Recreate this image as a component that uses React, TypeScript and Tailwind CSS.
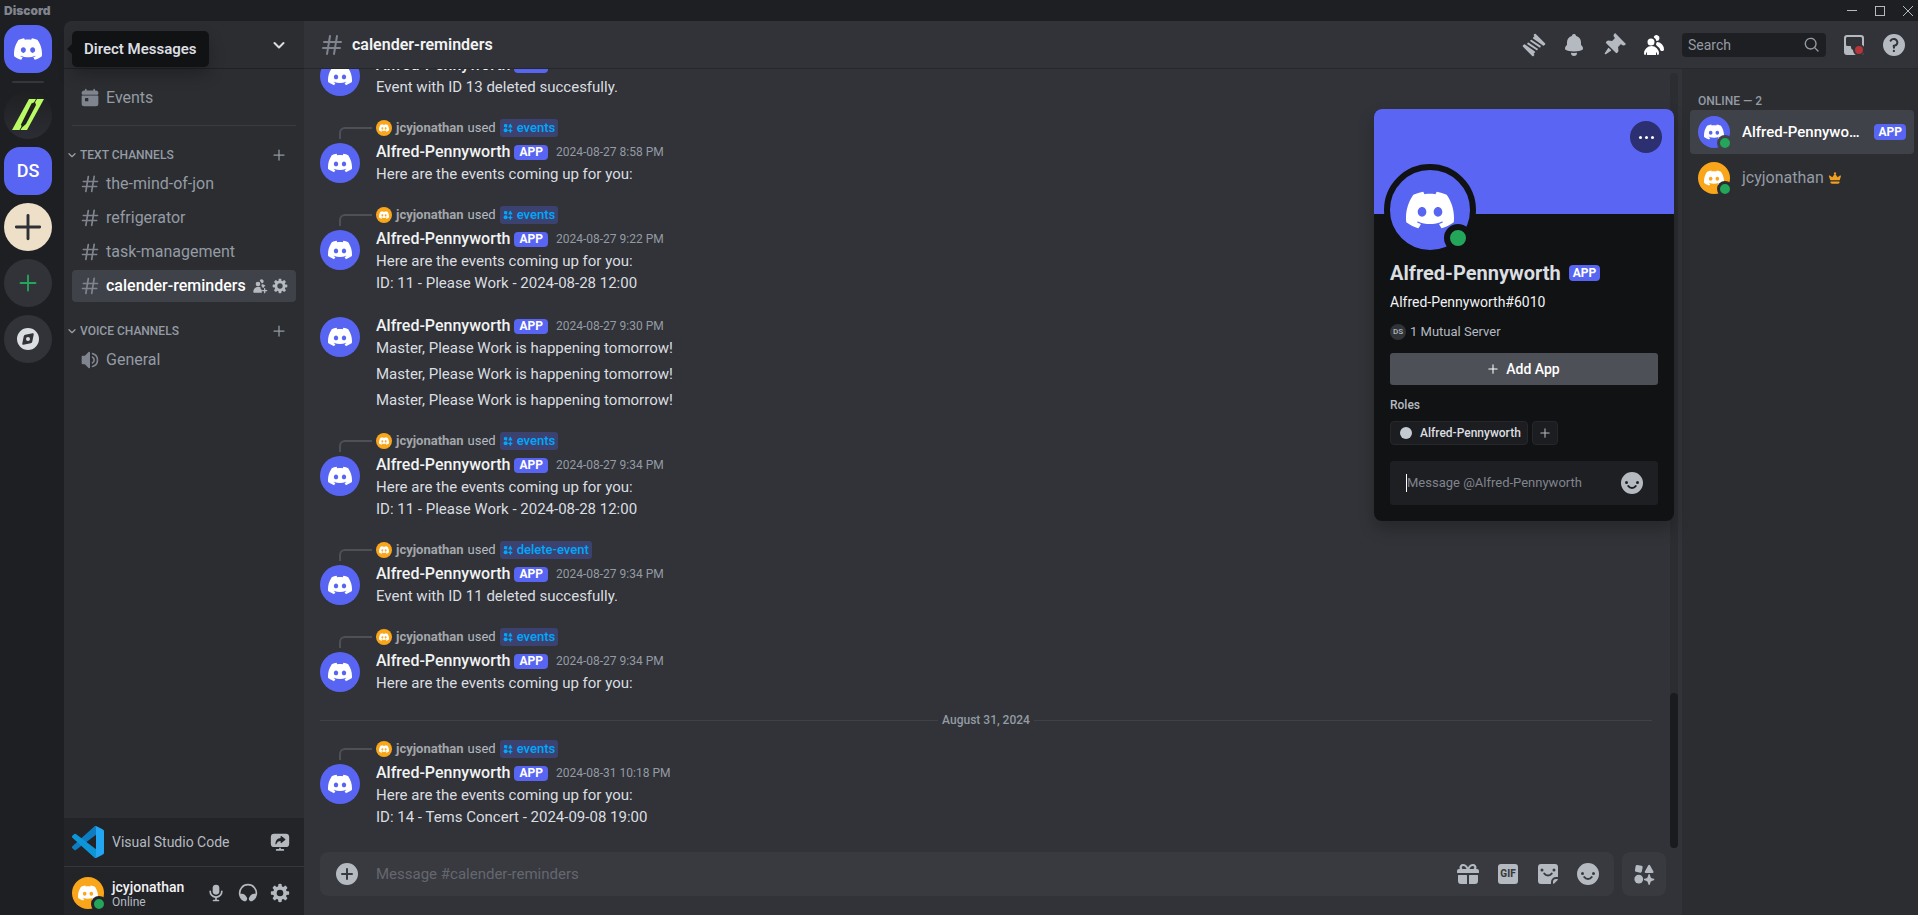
import React from "react";
import clsx from "clsx";
import { SiDiscord } from "react-icons/si";

interface IconProps {
  className?: string;
  paths: string[];
}

interface MessageProps {
  command?: string;
  time: string;
  lines: string[];
  more?: string[];
}

const icons = {
  hash: [
    "M10.99 3.16A1 1 0 1 0 9 2.84L8.15 8H4a1 1 0 0 0 0 2h3.82l-.67 4H3a1 1 0 1 0 0 2h3.82l-.8 4.84a1 1 0 0 0 1.97.32L8.85 16h4.97l-.8 4.84a1 1 0 0 0 1.97.32l.86-5.16H20a1 1 0 1 0 0-2h-3.82l.67-4H21a1 1 0 1 0 0-2h-3.82l.8-4.84a1 1 0 1 0-1.97-.32L15.15 8h-4.97l.8-4.84ZM14.15 14l.67-4H9.85l-.67 4h4.97Z",
  ],
  mic: [
    "M12 2a4 4 0 0 0-4 4v4a4 4 0 0 0 8 0V6a4 4 0 0 0-4-4Z",
    "M6 10a1 1 0 0 0-2 0 8 8 0 0 0 7 7.94V20H9a1 1 0 1 0 0 2h6a1 1 0 1 0 0-2h-2v-2.06A8 8 0 0 0 20 10a1 1 0 1 0-2 0 6 6 0 0 1-12 0Z",
  ],
  headphones: [
    "M12 3a9 9 0 0 0-8.95 10h1.87a5 5 0 0 1 4.1 2.13l1.37 1.97a3.1 3.1 0 0 1-.17 3.78 2.85 2.85 0 0 1-3.55.74 11 11 0 1 1 10.66 0c-1.27.71-2.73.23-3.55-.74a3.1 3.1 0 0 1-.17-3.78l1.38-1.97a5 5 0 0 1 4.1-2.13h1.86A9 9 0 0 0 12 3Z",
  ],
  gear: [
    "M10.56 1.1c-.46.05-.7.53-.64.98.18 1.16-.19 2.2-.98 2.53-.8.33-1.79-.15-2.49-1.1-.27-.36-.78-.52-1.14-.24-.77.59-1.45 1.27-2.04 2.04-.28.36-.12.87.24 1.14.96.7 1.43 1.7 1.1 2.49-.33.8-1.37 1.16-2.53.98-.45-.07-.93.18-.99.64a11.1 11.1 0 0 0 0 2.88c.06.46.54.7.99.64 1.16-.18 2.2.19 2.53.98.33.8-.14 1.79-1.1 2.49-.36.27-.52.78-.24 1.14.59.77 1.27 1.45 2.04 2.04.36.28.87.12 1.14-.24.7-.95 1.7-1.43 2.49-1.1.8.33 1.16 1.37.98 2.53-.07.45.18.93.64.99a11.1 11.1 0 0 0 2.88 0c.46-.06.7-.54.64-.99-.18-1.16.19-2.2.98-2.53.8-.33 1.79.14 2.49 1.1.27.36.78.52 1.14.24.77-.59 1.45-1.27 2.04-2.04.28-.36.12-.87-.24-1.14-.96-.7-1.43-1.7-1.1-2.49.33-.8 1.37-1.16 2.53-.98.45.07.93-.18.99-.64a11.1 11.1 0 0 0 0-2.88c-.06-.46-.54-.7-.99-.64-1.16.18-2.2-.19-2.53-.98-.33-.8.14-1.79 1.1-2.49.36-.27.52-.78.24-1.14a11.07 11.07 0 0 0-2.04-2.04c-.36-.28-.87-.12-1.14.24-.7.96-1.7 1.43-2.49 1.1-.8-.33-1.16-1.37-.98-2.53.07-.45-.18-.93-.64-.99a11.1 11.1 0 0 0-2.88 0ZM16 12a4 4 0 1 1-8 0 4 4 0 0 1 8 0Z",
  ],
  smile: [
    "M12 23a11 11 0 1 0 0-22 11 11 0 0 0 0 22ZM6.5 13a1.5 1.5 0 1 0 0-3 1.5 1.5 0 0 0 0 3Zm11 0a1.5 1.5 0 1 0 0-3 1.5 1.5 0 0 0 0 3Zm-9.8 1.17a1 1 0 0 1 1.39.27 3.5 3.5 0 0 0 5.82 0 1 1 0 0 1 1.66 1.12 5.5 5.5 0 0 1-9.14 0 1 1 0 0 1 .27-1.4Z",
  ],
  bell: [
    "M9.7 2.89c.18-.07.32-.24.37-.43a2 2 0 0 1 3.86 0c.05.2.19.36.38.43A7 7 0 0 1 19 9.5v2.09c0 .12.05.24.13.33l1.1 1.22a3 3 0 0 1 .77 2.01v.28c0 .67-.34 1.29-.95 1.56-1.31.6-4 1.51-8.05 1.51-4.05 0-6.74-.91-8.05-1.5-.61-.28-.95-.9-.95-1.57v-.28a3 3 0 0 1 .77-2l1.1-1.23a.5.5 0 0 0 .13-.33V9.5a7 7 0 0 1 4.7-6.61ZM9.18 19.84A.16.16 0 0 0 9 20a3 3 0 1 0 6 0c0-.1-.09-.17-.18-.16a24.84 24.84 0 0 1-5.64 0Z",
  ],
  pin: [
    "M19.38 11.38a3 3 0 0 0 4.24 0l.03-.03a.5.5 0 0 0 0-.7L13.35.35a.5.5 0 0 0-.7 0l-.03.03a3 3 0 0 0 0 4.24L13 5l-2.92 2.92-3.65-.34a2 2 0 0 0-1.6.58l-.62.63a1 1 0 0 0 0 1.42l9.58 9.58a1 1 0 0 0 1.42 0l.63-.63a2 2 0 0 0 .58-1.6l-.34-3.64L19 11l.38.38ZM9.07 17.07a.5.5 0 0 1-.08.77l-5.15 3.43a.5.5 0 0 1-.63-.06l-.42-.42a.5.5 0 0 1-.06-.63L6.16 15a.5.5 0 0 1 .77-.08l2.14 2.14Z",
  ],
  members: [
    "M14.5 8a3 3 0 1 0-2.7-4.3c-.2.4.06.86.44 1.12a5 5 0 0 1 2.14 3.08c.01.06.06.1.12.1ZM18.44 17.27c.15.43.54.73 1 .73h1.06c.83 0 1.5-.67 1.5-1.5a7.5 7.5 0 0 0-6.5-7.43c-.55-.08-.99.38-1.1.92-.06.3-.15.6-.26.87-.23.58-.05 1.3.47 1.63a9.53 9.53 0 0 1 3.83 4.78ZM12.5 9a3.5 3.5 0 1 1-7 0 3.5 3.5 0 0 1 7 0ZM2 20.5a7.5 7.5 0 0 1 15 0c0 .83-.67 1.5-1.5 1.5a.2.2 0 0 1-.2-.16c-.2-.96-.56-1.87-.88-2.54-.1-.23-.42-.15-.42.1v2.1a.5.5 0 0 1-.5.5h-8a.5.5 0 0 1-.5-.5v-2.1c0-.25-.31-.33-.42-.1-.32.67-.67 1.58-.88 2.54a.2.2 0 0 1-.2.16A1.5 1.5 0 0 1 2 20.5Z",
  ],
  threads: [
    "M12 2.81a1 1 0 0 1 0-1.41l.36-.36a1 1 0 0 1 1.41 0l9.2 9.2a1 1 0 0 1 0 1.4l-.7.7a1 1 0 0 1-1.3.13l-9.54-6.72a1 1 0 0 1-.08-1.58l1-1L12 2.8ZM12 21.2a1 1 0 0 1 0 1.41l-.35.35a1 1 0 0 1-1.41 0l-9.2-9.19a1 1 0 0 1 0-1.41l.7-.7a1 1 0 0 1 1.3-.12l9.54 6.72a1 1 0 0 1 .07 1.58l-1 1 .35.36ZM15.66 16.8a1 1 0 0 1-1.38.28l-8.49-5.66A1 1 0 1 1 6.9 9.76l8.49 5.65a1 1 0 0 1 .27 1.39ZM17.1 14.25a1 1 0 1 0 1.11-1.66L9.73 6.93a1 1 0 0 0-1.11 1.66l8.49 5.66Z",
  ],
  search: [
    "M15.62 17.03a9 9 0 1 1 1.41-1.41l4.68 4.67a1 1 0 0 1-1.42 1.42l-4.67-4.68ZM17 10a7 7 0 1 1-14 0 7 7 0 0 1 14 0Z",
  ],
  inbox: [
    "M5 2a3 3 0 0 0-3 3v14a3 3 0 0 0 3 3h14a3 3 0 0 0 3-3V5a3 3 0 0 0-3-3H5ZM4 5.5C4 4.67 4.67 4 5.5 4h13c.83 0 1.5.67 1.5 1.5v6c0 .83-.67 1.5-1.5 1.5h-2.65c-.5 0-.85.5-.85 1a3 3 0 1 1-6 0c0-.5-.35-1-.85-1H5.5A1.5 1.5 0 0 1 4 11.5v-6Z",
  ],
  help: [
    "M12 23a11 11 0 1 0 0-22 11 11 0 0 0 0 22Zm-.28-16c-.98 0-1.81.47-2.27 1.14A1 1 0 1 1 7.8 7.01 4.73 4.73 0 0 1 11.72 5c2.5 0 4.65 1.88 4.65 4.38 0 2.1-1.54 3.77-3.52 4.24l.14 1a1 1 0 0 1-1.98.27l-.28-2a1 1 0 0 1 .99-1.14c1.54 0 2.65-1.14 2.65-2.38 0-1.23-1.1-2.37-2.65-2.37ZM13 17.88a1.13 1.13 0 1 1-2.25 0 1.13 1.13 0 0 1 2.25 0Z",
  ],
  speaker: [
    "M12 3a1 1 0 0 0-1-1h-.06a1 1 0 0 0-.74.32L5.92 7H3a1 1 0 0 0-1 1v8a1 1 0 0 0 1 1h2.92l4.28 4.68a1 1 0 0 0 .74.32H11a1 1 0 0 0 1-1V3ZM15.1 20.75c-.58.14-1.1-.33-1.1-.92v-.03c0-.5.37-.92.85-1.05a7 7 0 0 0 0-13.5A1.11 1.11 0 0 1 14 4.2v-.03c0-.6.52-1.06 1.1-.92a9 9 0 0 1 0 17.5ZM15.16 16.51c-.57.28-1.16-.2-1.16-.83v-.14c0-.43.28-.8.63-1.02a3 3 0 0 0 0-5.04c-.35-.23-.63-.6-.63-1.02v-.14c0-.63.59-1.1 1.16-.83a5 5 0 0 1 0 9.02Z",
  ],
  compass: [
    "M23 12a11 11 0 1 1-22 0 11 11 0 0 1 22 0ZM7.74 9.3A2 2 0 0 1 9.3 7.75l7.22-1.45a1 1 0 0 1 1.18 1.18l-1.45 7.22a2 2 0 0 1-1.57 1.57l-7.22 1.45a1 1 0 0 1-1.18-1.18L7.74 9.3Z",
    "M14 12a2 2 0 1 1-4 0 2 2 0 0 1 4 0Z",
  ],
  crown: [
    "M5 18a1 1 0 0 0-1 1 3 3 0 0 0 3 3h10a3 3 0 0 0 3-3 1 1 0 0 0-1-1H5ZM3.04 7.76a1 1 0 0 0-1.52 1.15l2.25 6.42a1 1 0 0 0 .94.67h14.55a1 1 0 0 0 .95-.71l1.94-6.45a1 1 0 0 0-1.55-1.1l-4.11 3-3.55-5.33.82-.82a.83.83 0 0 0 0-1.18l-1.17-1.17a.83.83 0 0 0-1.18 0l-1.17 1.17a.83.83 0 0 0 0 1.18l.82.82-3.61 5.42-4.41-3.07Z",
  ],
  plusCircle: [
    "M12 23a11 11 0 1 0 0-22 11 11 0 0 0 0 22Zm0-17a1 1 0 0 1 1 1v4h4a1 1 0 1 1 0 2h-4v4a1 1 0 1 1-2 0v-4H7a1 1 0 1 1 0-2h4V7a1 1 0 0 1 1-1Z",
  ],
  invite: [
    "M14.5 8a3 3 0 1 0-2.7-4.3c-.2.4.06.86.44 1.12a5 5 0 0 1 2.14 3.08c.01.06.06.1.12.1Z",
    "M12.5 9a3.5 3.5 0 1 1-7 0 3.5 3.5 0 0 1 7 0Z",
    "M2 20.5a7.5 7.5 0 0 1 11-6.64A3 3 0 0 0 16 18h0a3 3 0 0 0-1 4h-2.5L4 22a1.5 1.5 0 0 1-2-1.5Z",
    "M14.6 9.4c2.5 0 4.6.8 5.9 2.6-1.7 0-2.5 1-2.5 2.3-.6.2-1.1.4-1.5.8a9.5 9.5 0 0 0-2.5-3.1c.3-.8.5-1.7.6-2.6Z",
    "M19 15a1 1 0 0 1 1 1v2h2a1 1 0 1 1 0 2h-2v2a1 1 0 1 1-2 0v-2h-2a1 1 0 1 1 0-2h2v-2a1 1 0 0 1 1-1Z",
  ],
  calendar: [
    "M7 1a1 1 0 0 1 1 1v.75c0 .14.11.25.25.25h7.5c.14 0 .25-.11.25-.25V2a1 1 0 1 1 2 0v.75c0 .14.11.25.25.25H19a3 3 0 0 1 3 3v1a1 1 0 0 1-1 1H3a1 1 0 0 1-1-1V6a3 3 0 0 1 3-3h.75A.25.25 0 0 0 6 2.75V2a1 1 0 0 1 1-1Z",
    "M2 10a1 1 0 0 1 1-1h18a1 1 0 0 1 1 1v9a3 3 0 0 1-3 3H5a3 3 0 0 1-3-3v-9Zm4.5 2a.5.5 0 0 0-.5.5v3c0 .28.22.5.5.5h3a.5.5 0 0 0 .5-.5v-3a.5.5 0 0 0-.5-.5h-3Z",
  ],
  gift: [
    "M7 2a3.5 3.5 0 0 0-3.3 4.7c.05.16-.07.3-.24.3H3a2 2 0 0 0-2 2v1.5c0 .28.22.5.5.5h21a.5.5 0 0 0 .5-.5V9a2 2 0 0 0-2-2h-.46c-.17 0-.29-.14-.24-.3A3.5 3.5 0 0 0 17 2c-2.3 0-4 1.3-5 3.5C11 3.3 9.3 2 7 2Zm.2 2c1.5 0 2.6 1 3.3 3H7.2a1.5 1.5 0 0 1 0-3Zm9.6 0a1.5 1.5 0 0 1 0 3h-3.3c.7-2 1.8-3 3.3-3Z",
    "M2.5 13h8c.28 0 .5.22.5.5v8a.5.5 0 0 1-.5.5H5a3 3 0 0 1-3-3v-5.5c0-.28.22-.5.5-.5ZM13.5 13h8c.28 0 .5.22.5.5V19a3 3 0 0 1-3 3h-5.5a.5.5 0 0 1-.5-.5v-8c0-.28.22-.5.5-.5Z",
  ],
  sticker: [
    "M5 2a3 3 0 0 0-3 3v14a3 3 0 0 0 3 3h9.5c.28 0 .5-.22.5-.5V20a5 5 0 0 1 5-5h1.5a.5.5 0 0 0 .5-.5V5a3 3 0 0 0-3-3H5Zm1 7.5a1.5 1.5 0 1 0 0-3 1.5 1.5 0 0 0 0 3Zm12 0a1.5 1.5 0 1 0 0-3 1.5 1.5 0 0 0 0 3ZM7.7 10.7a1 1 0 0 1 1.39.27 3.5 3.5 0 0 0 5.82 0 1 1 0 0 1 1.66 1.12 5.5 5.5 0 0 1-9.14 0 1 1 0 0 1 .27-1.4Z",
    "M17 21.3V20a3 3 0 0 1 3-3h1.3c.5 0 .7.5.4.9l-3.8 3.8c-.4.3-.9.1-.9-.4Z",
  ],
  apps: [
    "M4.5 2.2 9.3 3a1.5 1.5 0 0 1 1.2 1.8l-.9 4.5a1.5 1.5 0 0 1-1.8 1.2l-4.5-.9a1.5 1.5 0 0 1-1.2-1.8l.8-4.5a1.5 1.5 0 0 1 1.6-1.1Z",
    "M16.7 2.5a1 1 0 0 1 1.8 0l3.8 6.8a1 1 0 0 1-.9 1.5h-7.6a1 1 0 0 1-.9-1.5l3.8-6.8Z",
    "M6.3 22.3a4.8 4.8 0 1 0 0-9.6 4.8 4.8 0 0 0 0 9.6Z",
    "M16.8 12.9a.8.8 0 0 1 1.6 0l.8 2.4a2 2 0 0 0 1.2 1.2l2.3.8a.8.8 0 0 1 0 1.5l-2.3.8a2 2 0 0 0-1.2 1.2l-.8 2.3a.8.8 0 0 1-1.6 0l-.8-2.3a2 2 0 0 0-1.2-1.2l-2.3-.8a.8.8 0 0 1 0-1.5l2.3-.8a2 2 0 0 0 1.2-1.2l.8-2.4Z",
  ],
  stream: [
    "M5 2a4 4 0 0 0-4 4v8a4 4 0 0 0 4 4h14a4 4 0 0 0 4-4V6a4 4 0 0 0-4-4H5Zm8.7 2.8 4.5 3.7a.6.6 0 0 1 0 1l-4.5 3.7a.6.6 0 0 1-1-.5V10.9c-2.7 0-4.2 1.2-5 3.5-.2.6-1.4.4-1.3-.3.5-4.4 2.6-6.6 6.3-6.9V5.3c0-.6.6-.8 1-.5Z",
    "M11 19h2v1.5h3a1 1 0 1 1 0 2H8a1 1 0 1 1 0-2h3V19Z",
  ],
};

const guildButton =
  "flex size-12 shrink-0 items-center justify-center overflow-hidden text-lg font-medium text-white";

function Icon({ paths, className }: IconProps) {
  return (
    <svg
      viewBox="0 0 24 24"
      fill="currentColor"
      fillRule="evenodd"
      className={clsx("shrink-0", className)}
      aria-hidden="true"
    >
      {paths.map((d) => (
        <path key={d} d={d} />
      ))}
    </svg>
  );
}

function Plus({ className }: { className?: string }) {
  return (
    <svg viewBox="0 0 24 24" className={clsx("shrink-0", className)} aria-hidden="true">
      <path d="M12 2v20M2 12h20" stroke="currentColor" strokeWidth="2.5" strokeLinecap="round" />
    </svg>
  );
}

function Chevron({ className }: { className?: string }) {
  return (
    <svg viewBox="0 0 12 12" className={clsx("shrink-0", className)} aria-hidden="true">
      <path
        d="m1.5 4 4.5 4.5L10.5 4"
        fill="none"
        stroke="currentColor"
        strokeWidth="2"
        strokeLinecap="round"
        strokeLinejoin="round"
      />
    </svg>
  );
}

function VsCode() {
  return (
    <svg viewBox="0 0 100 100" className="size-8 shrink-0" aria-hidden="true">
      <path
        fill="#0d7cc0"
        d="M96.46 10.8 75.86.88a6.23 6.23 0 0 0-7.11 1.2L1.3 63.58a4.17 4.17 0 0 0 0 6.17l5.51 5a4.17 4.17 0 0 0 5.32.24L75 27.3V4.67L96.46 10.8Z"
      />
      <path
        fill="#0e95d8"
        d="m96.46 89.2-20.6 9.92a6.23 6.23 0 0 1-7.11-1.2L1.3 36.42a4.17 4.17 0 0 1 0-6.17l5.51-5a4.17 4.17 0 0 1 5.32-.24L75 72.7v22.63l21.46-6.13Z"
      />
      <path
        fill="#22a6f1"
        d="M75.86 99.13a6.23 6.23 0 0 1-7.11-1.21c2.31 2.3 6.25.67 6.25-2.59V4.67c0-3.26-3.94-4.89-6.25-2.59a6.23 6.23 0 0 1 7.11-1.21l20.6 9.91A6.25 6.25 0 0 1 100 16.41v67.18c0 2.4-1.38 4.59-3.54 5.63l-20.6 9.91Z"
      />
    </svg>
  );
}

function Avatar({ orange, ring }: { orange?: boolean; ring: string }) {
  return (
    <span
      className={clsx(
        "relative flex size-8 shrink-0 items-center justify-center rounded-full text-white",
        orange ? "bg-[#faa61a]" : "bg-[#5865f2]"
      )}
    >
      <SiDiscord className="size-5" />
      <span
        className={clsx("absolute -right-[3px] -bottom-[3px] size-4 rounded-full border-3 bg-[#23a55a]", ring)}
      />
    </span>
  );
}

function AppTag({ className }: { className?: string }) {
  return (
    <span
      className={clsx(
        "flex shrink-0 items-center rounded bg-[#5865f2] text-xs leading-none font-bold text-white",
        className
      )}
    >
      APP
    </span>
  );
}

function Message({ command, time, lines, more = [] }: MessageProps) {
  return (
    <article className="mt-[17px] text-[15px] leading-[22px] text-[#dbdee1]">
      <div className="py-[2px]">
        {command && (
          <div className="mb-1 flex h-[18px] items-center text-[13px] text-[#b5bac1]">
            <span className="mt-2 mr-1 -mb-[2px] ml-[19px] h-3 w-[33px] shrink-0 rounded-tl-md border-t-2 border-l-2 border-[#4e5058]" />
            <span className="mr-1 flex size-4 items-center justify-center rounded-full bg-[#faa61a] text-white">
              <SiDiscord className="size-[10px]" />
            </span>
            <span className="font-bold text-[#a3a6aa]">jcyjonathan</span>
            <span className="mx-1">used</span>
            <button
              type="button"
              className="flex h-[18px] items-center gap-1 rounded-[3px] bg-[#3c4270] px-[3px] font-medium text-[#00a8fc]"
            >
              <Icon paths={icons.apps} className="size-[10px]" />
              {command}
            </button>
          </div>
        )}
        <div className="flex gap-4">
          <span className="mt-[2px] flex size-10 shrink-0 items-center justify-center rounded-full bg-[#5865f2] text-white">
            <SiDiscord className="size-6" />
          </span>
          <div>
            <div className="flex h-[22px] items-center">
              <span className="mr-1 text-base leading-[22px] font-medium text-[#f2f3f5]">Alfred-Pennyworth</span>
              <AppTag className="h-[15px] px-[5px]" />
              <time className="ml-2 text-xs text-[#949ba4]">{time}</time>
            </div>
            {lines.map((line) => (
              <p key={line}>{line}</p>
            ))}
          </div>
        </div>
      </div>
      {more.map((line, i) => (
        <p key={i} className="py-[2px] pl-14">
          {line}
        </p>
      ))}
    </article>
  );
}

function Channel({ name, active }: { name: string; active?: boolean }) {
  return (
    <li>
      <a
        href="#"
        className={clsx(
          "flex h-8 items-center gap-[6px] rounded px-2",
          active ? "bg-[#404249] font-medium text-white" : "text-[#949ba4]"
        )}
      >
        <Icon paths={icons.hash} className="size-5 text-[#80848e]" />
        <span className="flex-1">{name}</span>
        {active && (
          <span className="flex gap-1 text-[#b5bac1]">
            <Icon paths={icons.invite} className="size-4" />
            <Icon paths={icons.gear} className="size-4" />
          </span>
        )}
      </a>
    </li>
  );
}

function SectionLabel({ children }: { children: React.ReactNode }) {
  return (
    <div className="mt-[21px] mb-[5px] flex h-4 items-center text-xs font-medium text-[#949ba4] uppercase">
      <Chevron className="mr-1 -ml-1 size-2" />
      <h2 className="flex-1">{children}</h2>
      <button type="button" aria-label="Create Channel" className="mr-[11px]">
        <Plus className="size-3" />
      </button>
    </div>
  );
}

function TitleBar() {
  return (
    <div className="flex h-[21px] shrink-0 items-center justify-between bg-[#1e1f22] pl-1 text-[#b5bac1]">
      <span className="font-['Inter',sans-serif] text-xs leading-none font-black text-[#80848e]">Discord</span>
      <div className="flex gap-2">
        <button type="button" aria-label="Minimize" className="flex h-5 w-5 items-center justify-center">
          <span className="h-px w-[10px] bg-current" />
        </button>
        <button type="button" aria-label="Maximize" className="flex h-5 w-5 items-center justify-center">
          <span className="size-[10px] border border-current" />
        </button>
        <button type="button" aria-label="Close" className="flex h-5 w-5 items-center justify-center">
          <svg viewBox="0 0 10 10" className="size-[10px]" aria-hidden="true">
            <path d="m0 0 10 10M10 0 0 10" stroke="currentColor" />
          </svg>
        </button>
      </div>
    </div>
  );
}

function GuildRail() {
  return (
    <nav className="flex w-16 shrink-0 flex-col items-center gap-2 pt-1 pr-2">
      <div className="relative z-20">
        <button type="button" aria-label="Direct Messages" className={clsx(guildButton, "rounded-2xl bg-[#5865f2]")}>
          <SiDiscord className="size-7" />
        </button>
        <div
          role="tooltip"
          className="absolute top-[6px] left-[68px] flex h-9 items-center rounded-[5px] bg-[#111214] px-3 text-[15px] font-semibold whitespace-nowrap text-[#dbdee1] shadow-[0_8px_16px_rgba(0,0,0,0.24)]"
        >
          <span className="absolute top-[13px] -left-[5px] border-y-5 border-r-5 border-y-transparent border-r-[#111214]" />
          Direct Messages
        </div>
      </div>
      <span className="h-[2px] w-8 shrink-0 rounded-sm bg-[#35363c]" />
      <button
        type="button"
        aria-label="Green slashes server"
        className={clsx(guildButton, "rounded-full bg-linear-to-b from-[#1f2021] to-[#2c2c35]")}
      >
        <svg viewBox="0 0 48 48" className="size-12" aria-hidden="true">
          <path d="M25 8h15L23 39H8Z" fill="#b9fb64" />
          <path d="m31 11-3.5 1.5L17 33.5l1 3 4-3.5L32 14Z" fill="#20211f" />
          <path d="m32.5 8-3.5 6M16 39l3.5-6" stroke="#20211f" strokeWidth="1" />
        </svg>
      </button>
      <button type="button" className={clsx(guildButton, "rounded-2xl bg-[#5865f2]")}>
        DS
      </button>
      <button type="button" aria-label="Plus server" className={clsx(guildButton, "rounded-full bg-[#eee0c8]")}>
        <Plus className="size-7 text-[#2f3136]" />
      </button>
      <button type="button" aria-label="Add a Server" className={clsx(guildButton, "rounded-full bg-[#313338]")}>
        <Plus className="size-[18px] text-[#23a55a]" />
      </button>
      <button type="button" aria-label="Explore" className={clsx(guildButton, "rounded-full bg-[#313338]")}>
        <Icon paths={icons.compass} className="size-6 text-[#dbdee1]" />
      </button>
    </nav>
  );
}

function Sidebar() {
  return (
    <aside className="flex w-60 shrink-0 flex-col overflow-hidden rounded-tl-lg bg-[#2b2d31]">
      <button
        type="button"
        aria-label="Server menu"
        className="flex h-12 shrink-0 items-center justify-end border-b border-[#1f2124] pr-[19px] text-[#dbdee1]"
      >
        <Chevron className="size-3" />
      </button>
      <div className="flex-1 px-2">
        <a href="#" className="mt-[13px] flex h-8 items-center gap-[6px] px-2 text-[#949ba4]">
          <Icon paths={icons.calendar} className="size-5 text-[#80848e]" />
          Events
        </a>
        <hr className="mt-[11px] border-[#3b3d44]" />
        <SectionLabel>Text Channels</SectionLabel>
        <ul className="flex flex-col gap-[2px]">
          <Channel name="the-mind-of-jon" />
          <Channel name="refrigerator" />
          <Channel name="task-management" />
          <Channel name="calender-reminders" active />
        </ul>
        <SectionLabel>Voice Channels</SectionLabel>
        <a href="#" className="flex h-8 items-center gap-[6px] px-2 text-[#949ba4]">
          <Icon paths={icons.speaker} className="size-5 text-[#80848e]" />
          General
        </a>
      </div>
      <section className="bg-[#232428] text-[#b5bac1]">
        <div className="flex h-12 items-center gap-2 px-2 text-sm">
          <VsCode />
          <span className="flex-1">Visual Studio Code</span>
          <button type="button" aria-label="Stream" className="flex size-8 items-center justify-center">
            <Icon paths={icons.stream} className="size-5" />
          </button>
        </div>
        <div className="flex h-[49px] items-center gap-2 border-t border-[#35373c] px-2 pt-1">
          <Avatar orange ring="border-[#232428]" />
          <div className="flex-1">
            <div className="text-sm leading-[18px] font-medium text-[#f2f3f5]">jcyjonathan</div>
            <div className="text-xs leading-[13px]">Online</div>
          </div>
          <div className="flex">
            <button type="button" aria-label="Mute" className="flex size-8 items-center justify-center">
              <Icon paths={icons.mic} className="size-5" />
            </button>
            <button type="button" aria-label="Deafen" className="flex size-8 items-center justify-center">
              <Icon paths={icons.headphones} className="size-5" />
            </button>
            <button type="button" aria-label="User Settings" className="flex size-8 items-center justify-center">
              <Icon paths={icons.gear} className="size-5" />
            </button>
          </div>
        </div>
      </section>
    </aside>
  );
}

function ChannelHeader() {
  return (
    <header className="flex h-12 shrink-0 items-center gap-4 border-b border-[#26282c] bg-[#313338] pr-3 pl-4 text-[#b5bac1]">
      <div className="flex flex-1 items-center gap-2">
        <Icon paths={icons.hash} className="size-6 text-[#80848e]" />
        <h1 className="font-semibold text-[#f2f3f5]">calender-reminders</h1>
      </div>
      <button type="button" aria-label="Threads">
        <Icon paths={icons.threads} className="size-6" />
      </button>
      <button type="button" aria-label="Notification Settings">
        <Icon paths={icons.bell} className="size-6" />
      </button>
      <button type="button" aria-label="Pinned Messages">
        <Icon paths={icons.pin} className="size-6" />
      </button>
      <button type="button" aria-label="Member List" className="text-white">
        <Icon paths={icons.members} className="size-6" />
      </button>
      <label className="flex h-6 w-36 items-center rounded bg-[#1e1f22] px-[6px] text-[#949ba4]">
        <input
          type="text"
          placeholder="Search"
          aria-label="Search"
          className="min-w-0 flex-1 text-sm placeholder:text-[#949ba4] focus:outline-none"
        />
        <Icon paths={icons.search} className="size-4" />
      </label>
      <button type="button" aria-label="Inbox" className="relative">
        <Icon paths={icons.inbox} className="size-6" />
        <span className="absolute right-px bottom-px size-3 rounded-full border-2 border-[#313338] bg-[#b5363a]" />
      </button>
      <button type="button" aria-label="Help">
        <Icon paths={icons.help} className="size-6" />
      </button>
    </header>
  );
}

function Composer() {
  return (
    <form className="flex shrink-0 gap-2 px-4 pb-[19px] text-[#b5bac1]">
      <div className="flex h-11 flex-1 items-center rounded-lg bg-[#383a40] pr-[14px] pl-[15px]">
        <button type="button" aria-label="Attach">
          <Icon paths={icons.plusCircle} className="size-6" />
        </button>
        <input
          type="text"
          aria-label="Message"
          placeholder="Message #calender-reminders"
          className="ml-[17px] min-w-0 flex-1 text-[15px] placeholder:text-[#65676f] focus:outline-none"
        />
        <div className="flex gap-4">
          <button type="button" aria-label="Gift">
            <Icon paths={icons.gift} className="size-6" />
          </button>
          <button type="button" className="flex size-6 items-center justify-center">
            <span className="flex size-5 items-center justify-center rounded-[3px] bg-[#b5bac1] text-[10px] leading-none font-extrabold text-[#383a40]">
              GIF
            </span>
          </button>
          <button type="button" aria-label="Stickers">
            <Icon paths={icons.sticker} className="size-6" />
          </button>
          <button type="button" aria-label="Emoji">
            <Icon paths={icons.smile} className="size-6" />
          </button>
        </div>
      </div>
      <button type="button" aria-label="Apps" className="flex size-11 items-center justify-center rounded-lg bg-[#383a40]">
        <Icon paths={icons.apps} className="size-[22px]" />
      </button>
    </form>
  );
}

function Chat() {
  return (
    <main className="flex min-w-0 flex-1 flex-col">
      <div className="flex min-h-0 flex-1">
        <div className="flex min-w-0 flex-1 flex-col justify-end overflow-hidden pr-[18px] pb-[22px] pl-4">
          <Message time="2024-08-27 8:58 PM" lines={["Event with ID 13 deleted succesfully."]} />
          <Message time="2024-08-27 8:58 PM" command="events" lines={["Here are the events coming up for you:"]} />
          <Message
            time="2024-08-27 9:22 PM"
            command="events"
            lines={["Here are the events coming up for you:", "ID: 11 - Please Work - 2024-08-28 12:00"]}
          />
          <Message
            time="2024-08-27 9:30 PM"
            lines={["Master, Please Work is happening tomorrow!"]}
            more={["Master, Please Work is happening tomorrow!", "Master, Please Work is happening tomorrow!"]}
          />
          <Message
            time="2024-08-27 9:34 PM"
            command="events"
            lines={["Here are the events coming up for you:", "ID: 11 - Please Work - 2024-08-28 12:00"]}
          />
          <Message time="2024-08-27 9:34 PM" command="delete-event" lines={["Event with ID 11 deleted succesfully."]} />
          <Message time="2024-08-27 9:34 PM" command="events" lines={["Here are the events coming up for you:"]} />
          <div className="mt-4 flex h-4 items-center gap-1 text-xs font-medium text-[#949ba4]">
            <hr className="flex-1 border-[#3f4147]" />
            <time>August 31, 2024</time>
            <hr className="flex-1 border-[#3f4147]" />
          </div>
          <div className="-mt-[7px]">
            <Message
              time="2024-08-31 10:18 PM"
              command="events"
              lines={["Here are the events coming up for you:", "ID: 14 - Tems Concert - 2024-09-08 19:00"]}
            />
          </div>
        </div>
        <div className="my-1 mr-1 flex w-2 shrink-0 flex-col justify-end rounded bg-[#2b2d31]">
          <div className="h-1/5 rounded bg-[#1a1b1e]" />
        </div>
      </div>
      <Composer />
    </main>
  );
}

function ProfilePopout() {
  return (
    <section
      aria-label="Profile"
      className="absolute top-10 right-full z-10 mr-2 w-[300px] overflow-hidden rounded-lg bg-[#111214] shadow-[0_8px_16px_rgba(0,0,0,0.24)]"
    >
      <div className="flex h-[105px] items-start justify-end bg-[#5b65f4] p-3">
        <button
          type="button"
          aria-label="More"
          className="flex size-8 items-center justify-center gap-[3px] rounded-full bg-[#2c2f70]"
        >
          <span className="size-[3px] rounded-full bg-white" />
          <span className="size-[3px] rounded-full bg-white" />
          <span className="size-[3px] rounded-full bg-white" />
        </button>
      </div>
      <div className="px-4 pb-4">
        <div className="relative -mt-[50px] -ml-[6px] flex size-[92px] items-center justify-center rounded-full border-6 border-[#111214] bg-[#5865f2] text-white">
          <SiDiscord className="size-12" />
          <span className="absolute -right-[2px] -bottom-[2px] size-7 rounded-full border-6 border-[#111214] bg-[#23a55a]" />
        </div>
        <div className="mt-[5px] flex h-6 items-center gap-2">
          <h2 className="text-xl font-bold text-[#dbdee1]">Alfred-Pennyworth</h2>
          <AppTag className="h-4 px-1" />
        </div>
        <p className="mt-2 text-sm leading-[18px] text-[#f2f3f5]">Alfred-Pennyworth#6010</p>
        <div className="mt-[13px] flex h-4 items-center gap-1 text-[13px] text-[#b5bac1]">
          <span className="flex size-4 items-center justify-center rounded-full bg-[#313338] text-[8px] font-medium">
            DS
          </span>
          1 Mutual Server
        </div>
        <button
          type="button"
          className="mt-[13px] flex h-8 w-full items-center justify-center gap-2 rounded-[3px] bg-[#4e5058] text-sm font-medium text-white"
        >
          <Plus className="size-[10px]" />
          Add App
        </button>
        <h3 className="mt-3 text-xs font-medium text-[#b5bac1]">Roles</h3>
        <div className="mt-2 flex gap-1 text-xs font-medium text-[#dbdee1]">
          <span className="flex h-6 items-center gap-2 rounded border border-[#26272b] bg-[#1c1d20] pr-[6px] pl-[9px]">
            <span className="size-3 rounded-full bg-[#c4cbd1]" />
            Alfred-Pennyworth
          </span>
          <button
            type="button"
            aria-label="Add role"
            className="flex h-6 w-[26px] items-center justify-center rounded border border-[#26272b] bg-[#1c1d20] text-[#b5bac1]"
          >
            <Plus className="size-[10px]" />
          </button>
        </div>
        <div className="mt-4 flex h-11 items-center rounded-[3px] bg-[#1e1f22] pr-[14px] pl-4">
          <span className="h-[18px] w-px bg-white" />
          <input
            type="text"
            aria-label="Message Alfred-Pennyworth"
            placeholder="Message @Alfred-Pennyworth"
            className="min-w-0 flex-1 text-[13px] placeholder:text-[#80848e] focus:outline-none"
          />
          <button type="button" aria-label="Emoji" className="text-[#b5bac1]">
            <Icon paths={icons.smile} className="size-6" />
          </button>
        </div>
      </div>
    </section>
  );
}

function MemberList() {
  return (
    <aside className="relative w-[236px] shrink-0 bg-[#2b2d31] pr-1 pl-2">
      <ProfilePopout />
      <h2 className="mt-6 mb-px pl-2 text-xs font-medium text-[#949ba4]">ONLINE — 2</h2>
      <ul className="flex flex-col gap-[2px]">
        <li className="flex h-11 items-center rounded bg-[#404249] px-2 text-white">
          <Avatar ring="border-[#404249]" />
          <span className="mr-3 ml-3 min-w-0 flex-1 truncate text-[15px] font-medium">Alfred-Pennyworth</span>
          <AppTag className="h-4 px-1" />
        </li>
        <li className="flex h-11 items-center px-2 text-[#949ba4]">
          <Avatar orange ring="border-[#2b2d31]" />
          <span className="mr-1 ml-3">jcyjonathan</span>
          <Icon paths={icons.crown} className="size-[14px] text-[#f0a020]" />
        </li>
      </ul>
    </aside>
  );
}

export default function App() {
  return (
    <div className="flex h-screen flex-col overflow-hidden bg-[#1e1f22] font-['Roboto',sans-serif] text-base">
      <TitleBar />
      <div className="flex min-h-0 flex-1">
        <GuildRail />
        <Sidebar />
        <div className="flex min-w-0 flex-1 flex-col bg-[#313338]">
          <ChannelHeader />
          <div className="flex min-h-0 flex-1">
            <Chat />
            <MemberList />
          </div>
        </div>
      </div>
    </div>
  );
}
